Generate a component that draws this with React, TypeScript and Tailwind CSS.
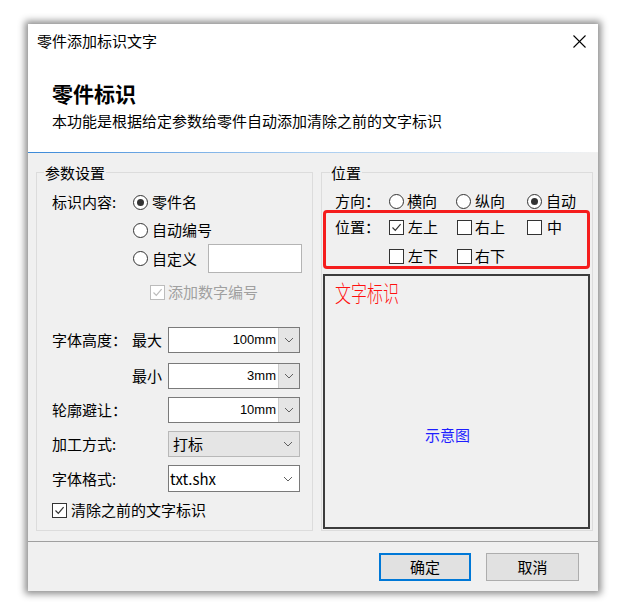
import React from "react";

function Radio({ checked }: { checked?: boolean }) {
  return (
    <span className="w-[15px] h-[15px] rounded-full border border-[#333333] bg-white flex items-center justify-center shrink-0">
      {checked && <span className="w-[7px] h-[7px] rounded-full bg-[#333333]" />}
    </span>
  );
}

function Check({ checked, disabled }: { checked?: boolean; disabled?: boolean }) {
  const stroke = disabled ? "#bcbcbc" : "#333333";
  return (
    <span
      className={
        disabled
          ? "w-[15px] h-[15px] border border-[#bcbcbc] bg-white flex items-center justify-center shrink-0"
          : "w-[15px] h-[15px] border border-[#333333] bg-white flex items-center justify-center shrink-0"
      }
    >
      {checked && (
        <svg width="11" height="11" viewBox="0 0 11 11">
          <polyline points="1.5,5.5 4.3,8.3 9.6,2.2" fill="none" stroke={stroke} strokeWidth="1.2" />
        </svg>
      )}
    </span>
  );
}

function Chevron() {
  return (
    <svg width="10" height="6" viewBox="0 0 10 6">
      <polyline points="1,1 5,5 9,1" fill="none" stroke="#606060" strokeWidth="1" />
    </svg>
  );
}

function Combo({ value }: { value: string }) {
  return (
    <div className="w-[132px] h-[26px] border border-[#7a7a7a] bg-white flex">
      <div className="flex-1 text-right pr-[2px] leading-[24px] text-[13px] font-['Liberation_Sans',sans-serif]">{value}</div>
      <div className="w-[21px] bg-[#e5e5e5] border-l border-[#cccccc] flex items-center justify-center">
        <Chevron />
      </div>
    </div>
  );
}

export default function App() {
  return (
    <div className="w-[628px] h-[611px] bg-white pl-[28px] pt-[24px] font-['Noto_Sans_CJK_SC',sans-serif] text-[15px] text-black">
      <div className="w-[570px] h-[567px] flex flex-col bg-white shadow-[0_0_7px_3px_rgba(0,0,0,0.45)]">
        {/* title bar */}
        <div className="h-[34px] flex items-center justify-between pl-[9px] pr-[12px] shrink-0">
          <span className="leading-[20px]">零件添加标识文字</span>
          <svg width="13" height="13" viewBox="0 0 13 13">
            <line x1="0.5" y1="0.5" x2="12.5" y2="12.5" stroke="#000" strokeWidth="1.1" />
            <line x1="12.5" y1="0.5" x2="0.5" y2="12.5" stroke="#000" strokeWidth="1.1" />
          </svg>
        </div>
        {/* header */}
        <div className="h-[94px] pl-[24px] pt-[21px] shrink-0">
          <div className="text-[21px] font-bold leading-[28px]">零件标识</div>
          <div className="mt-[4px] leading-[20px]">本功能是根据给定参数给零件自动添加清除之前的文字标识</div>
        </div>
        <div className="h-[1px] shrink-0 bg-linear-to-r from-[#3a89d8] via-[#a9cdf0] to-[#f2f2f2]" />
        {/* body */}
        <div className="flex-1 bg-[#f0f0f0] flex flex-col">
          <div className="flex gap-[8px] pl-[8px] pr-[5px] pt-[19px]">
            {/* left group */}
            <div className="relative w-[277px] h-[359px] border border-[#dcdcdc]">
              <span className="absolute left-[7px] -top-[10px] px-[1px] bg-[#f0f0f0] leading-[20px]">参数设置</span>
              <div className="flex flex-col pl-[15px] pt-[19px] leading-[20px]">
                <div className="flex items-center h-[20px]">
                  <span className="w-[81px]">标识内容:</span>
                  <Radio checked />
                  <span className="ml-[4px]">零件名</span>
                </div>
                <div className="flex items-center h-[20px] mt-[8px] pl-[81px]">
                  <Radio />
                  <span className="ml-[4px]">自动编号</span>
                </div>
                <div className="flex items-center h-[29px] mt-[4px] pl-[81px]">
                  <Radio />
                  <span className="ml-[4px]">自定义</span>
                  <div className="ml-[11px] w-[94px] h-[29px] border border-[#b4b4b4] bg-white" />
                </div>
                <div className="flex items-center h-[20px] mt-[9px] pl-[98px]">
                  <Check checked disabled />
                  <span className="ml-[3px] text-[#a0a0a0]">添加数字编号</span>
                </div>
                <div className="flex items-center h-[26px] mt-[25px]">
                  <span className="w-[80px]">字体高度：</span>
                  <span className="w-[36px]">最大</span>
                  <Combo value="100mm" />
                </div>
                <div className="flex items-center h-[26px] mt-[10px] pl-[80px]">
                  <span className="w-[36px]">最小</span>
                  <Combo value="3mm" />
                </div>
                <div className="flex items-center h-[26px] mt-[8px]">
                  <span className="w-[116px]">轮廓避让：</span>
                  <Combo value="10mm" />
                </div>
                <div className="flex items-center h-[26px] mt-[8px]">
                  <span className="w-[116px]">加工方式:</span>
                  <div className="w-[132px] h-[26px] border border-[#b8b8b8] bg-[#e5e5e5] flex items-center justify-between pl-[4px] pr-[6px]">
                    <span>打标</span>
                    <Chevron />
                  </div>
                </div>
                <div className="flex items-center h-[27px] mt-[8px]">
                  <span className="w-[116px]">字体格式:</span>
                  <div className="w-[132px] h-[27px] border border-[#7a7a7a] bg-white flex items-center justify-between pl-[1px] pr-[6px]">
                    <span>txt.shx</span>
                    <Chevron />
                  </div>
                </div>
                <div className="flex items-center h-[20px] mt-[8px]">
                  <Check checked />
                  <span className="ml-[4px]">清除之前的文字标识</span>
                </div>
              </div>
            </div>
            {/* right group */}
            <div className="relative w-[272px] h-[359px] border border-[#dcdcdc]">
              <span className="absolute left-[8px] -top-[10px] px-[1px] bg-[#f0f0f0] leading-[20px]">位置</span>
              <div className="flex flex-col pt-[19px] leading-[20px]">
                <div className="flex items-center h-[18px] pl-[13px]">
                  <span className="w-[54px]">方向：</span>
                  <span className="w-[67px] flex items-center">
                    <Radio />
                    <span className="ml-[3px]">横向</span>
                  </span>
                  <span className="w-[71px] flex items-center">
                    <Radio />
                    <span className="ml-[4px]">纵向</span>
                  </span>
                  <span className="flex items-center">
                    <Radio checked />
                    <span className="ml-[4px]">自动</span>
                  </span>
                </div>
                <div className="ml-[1px] w-[267px] h-[59px] border-[3px] border-[#f51d1d] rounded-[4px] pl-[9px] pt-[4px]">
                  <div className="flex items-center h-[20px]">
                    <span className="w-[54px]">位置：</span>
                    <span className="w-[68px] flex items-center">
                      <Check checked />
                      <span className="ml-[4px]">左上</span>
                    </span>
                    <span className="w-[70px] flex items-center">
                      <Check />
                      <span className="ml-[3px]">右上</span>
                    </span>
                    <span className="flex items-center">
                      <Check />
                      <span className="ml-[5px]">中</span>
                    </span>
                  </div>
                  <div className="flex items-center h-[20px] mt-[9px] pl-[54px]">
                    <span className="w-[68px] flex items-center">
                      <Check />
                      <span className="ml-[4px]">左下</span>
                    </span>
                    <span className="flex items-center">
                      <Check />
                      <span className="ml-[3px]">右下</span>
                    </span>
                  </div>
                </div>
                <div className="relative mt-[5px] ml-[1px] w-[267px] h-[255px] border-2 border-[#3c3c3c] bg-[#f0f0f0]">
                  <span className="absolute left-[10px] top-[5px] inline-block text-[16px] leading-none font-light text-[#ff1010] origin-top-left [transform:scaleY(1.4)]">
                    文字标识
                  </span>
                  <span className="absolute left-[100px] top-[151px] leading-[15px] text-[#1e1eff]">示意图</span>
                </div>
              </div>
            </div>
          </div>
          <div className="mt-[10px] h-[1px] bg-[#a0a0a0] shrink-0" />
          <div className="flex justify-end gap-[15px] pt-[11px] pr-[19px]">
            <button className="w-[92px] h-[28px] border-2 border-[#0078d7] bg-[#e1e1e1] leading-[20px]">确定</button>
            <button className="w-[93px] h-[28px] border border-[#adadad] bg-[#e1e1e1] leading-[20px]">取消</button>
          </div>
        </div>
      </div>
    </div>
  );
}
